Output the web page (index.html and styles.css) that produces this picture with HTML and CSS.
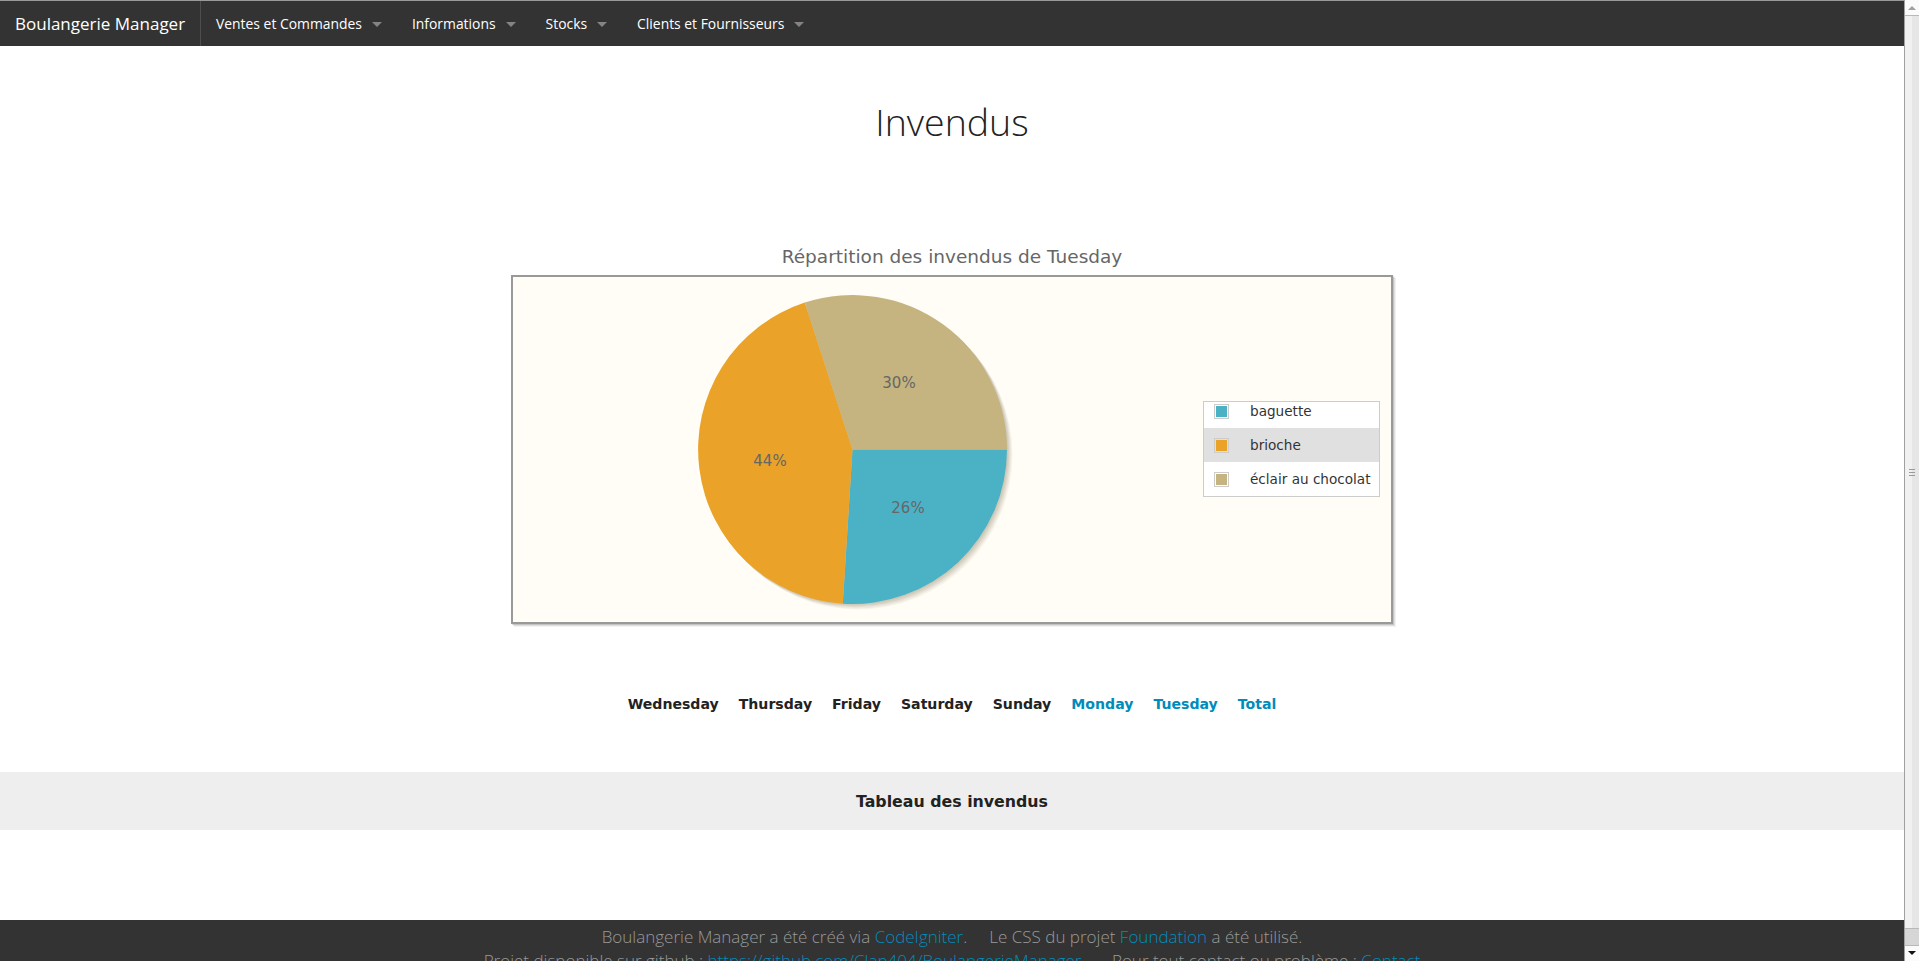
FILE: index.html
```html
<!DOCTYPE html>
<html lang="fr">
<head>
<meta charset="utf-8">
<title>Invendus - Boulangerie Manager</title>
<link rel="stylesheet" href="styles.css">
</head>
<body>
<nav class="topbar">
  <a class="brand" href="#">Boulangerie Manager</a>
  <ul class="menu">
    <li class="dropdown"><a href="#">Ventes et Commandes</a></li>
    <li class="dropdown"><a href="#">Informations</a></li>
    <li class="dropdown"><a href="#">Stocks</a></li>
    <li class="dropdown"><a href="#">Clients et Fournisseurs</a></li>
  </ul>
</nav>

<main class="content">
  <h1 class="page-title">Invendus</h1>

  <div class="chart-title">Répartition des invendus de Tuesday</div>
  <div class="chart-box">
    <svg class="pie" width="878" height="345" viewBox="0 0 878 345">
      <g fill="#5a4a20">
        <circle cx="340.6" cy="173.6" r="154.5" opacity="0.07"/>
        <circle cx="341.7" cy="174.7" r="154.5" opacity="0.07"/>
        <circle cx="342.8" cy="175.8" r="154.5" opacity="0.07"/>
        <circle cx="343.9" cy="176.9" r="154.5" opacity="0.06"/>
        <circle cx="345.0" cy="178.0" r="154.5" opacity="0.05"/>
      </g>
      <path d="M339.5 172.5 L494 172.5 A154.5 154.5 0 0 1 329.8 326.7 Z" fill="#4bb2c5"/>
      <path d="M339.5 172.5 L329.8 326.7 A154.5 154.5 0 0 1 291.8 25.6 Z" fill="#eaa228"/>
      <path d="M339.5 172.5 L291.8 25.6 A154.5 154.5 0 0 1 494 172.5 Z" fill="#c5b47f"/>
      <g class="pie-label">
        <text x="386" y="106" text-anchor="middle" dominant-baseline="central">30%</text>
        <text x="257" y="184" text-anchor="middle" dominant-baseline="central">44%</text>
        <text x="395" y="231" text-anchor="middle" dominant-baseline="central">26%</text>
      </g>
    </svg>
    <div class="legend">
      <table class="legend-table">
        <tr><td class="sw-cell"><div class="swatch"><div class="swatch-in c1"></div></div></td><td class="lbl">baguette</td></tr>
        <tr class="hl"><td class="sw-cell"><div class="swatch"><div class="swatch-in c2"></div></div></td><td class="lbl">brioche</td></tr>
        <tr><td class="sw-cell"><div class="swatch"><div class="swatch-in c3"></div></div></td><td class="lbl">éclair au chocolat</td></tr>
      </table>
    </div>
  </div>

  <div class="days">
    <a href="#" class="day">Wednesday</a>
    <a href="#" class="day">Thursday</a>
    <a href="#" class="day">Friday</a>
    <a href="#" class="day">Saturday</a>
    <a href="#" class="day">Sunday</a>
    <a href="#" class="day link">Monday</a>
    <a href="#" class="day link">Tuesday</a>
    <a href="#" class="day link">Total</a>
  </div>

  <div class="band">Tableau des invendus</div>
</main>

<footer class="footer">
  <p class="foot-line">Boulangerie Manager a été créé via <a href="#">CodeIgniter</a>.<span class="sep">Le CSS du projet <a href="#">Foundation</a> a été utilisé.</span></p>
  <p class="foot-line">Projet disponible sur github : <a href="#">https://github.com/Clap404/BoulangerieManager</a> .<span class="sep">Pour tout contact ou problème : <a href="#">Contact</a></span></p>
</footer>

<div class="scrollbar" aria-hidden="true">
  <div class="sb-btn sb-up"></div>
  <div class="sb-thumb"><div class="sb-grip"></div></div>
  <div class="sb-track"></div>
  <div class="sb-btn sb-down"></div>
</div>
</body>
</html>
```

FILE: styles.css
```css
body {
  margin: 0;
  padding-right: 15px;
  font-family: "DejaVu Sans", sans-serif;
  color: #222;
  background: #fff;
}

a {
  text-decoration: none;
}

/* Top bar */
.topbar {
  display: flex;
  align-items: stretch;
  height: 45px;
  background: #333;
  border-top: 1px solid #9a9a9a;
  font-family: "Open Sans", sans-serif;
}

.brand {
  display: flex;
  align-items: center;
  flex-shrink: 0;
  box-sizing: border-box;
  width: 201px;
  padding-left: 15px;
  white-space: nowrap;
  color: #fff;
  font-size: 17px;
  border-right: 1px solid #4e4e4e;
}

.menu {
  display: flex;
  margin: 0;
  padding: 0;
  list-style: none;
}

.menu li {
  position: relative;
  display: flex;
}

.menu li a {
  display: flex;
  align-items: center;
  padding: 0 35px 0 15px;
  white-space: nowrap;
  color: #fff;
  font-size: 13.9px;
}

.dropdown::after {
  content: "";
  position: absolute;
  right: 15px;
  top: 21px;
  border: 5px solid transparent;
  border-top-color: rgba(255, 255, 255, 0.4);
}

/* Content */
.content {
  display: flex;
  flex-direction: column;
  align-items: center;
}

.page-title {
  margin: 52px 0 0;
  font-family: "Open Sans", sans-serif;
  font-weight: 300;
  font-size: 37.5px;
  line-height: 48px;
  color: #222;
}

.chart-title {
  margin-top: 100px;
  line-height: 22px;
  font-size: 18.5px;
  color: #666;
}

.chart-box {
  position: relative;
  box-sizing: border-box;
  width: 882px;
  height: 349px;
  margin-top: 7px;
  border: 2px solid #999;
  background: #fffdf6;
  box-shadow: 1px 1px 0 rgba(0, 0, 0, 0.12), 2px 2px 0 rgba(0, 0, 0, 0.08), 3px 3px 0 rgba(0, 0, 0, 0.05);
}

.pie {
  display: block;
}

.pie-label {
  font-family: "DejaVu Sans", sans-serif;
  font-size: 15px;
  fill: #666;
}

.legend {
  position: absolute;
  left: 690px;
  top: 124px;
  width: 175px;
  height: 94px;
  border: 1px solid #ccc;
  background: #fff;
  overflow: hidden;
}

.legend-table {
  border-collapse: collapse;
  margin-top: -8px;
  width: 100%;
}

.legend-table td {
  height: 34px;
  padding: 0;
}

.legend-table .hl td {
  background: #e0e0e0;
}

.sw-cell {
  width: 36px;
  padding-left: 10px !important;
}

.swatch {
  width: 11px;
  height: 11px;
  padding: 1px;
  border: 1px solid #ccc;
}

.swatch-in {
  width: 11px;
  height: 11px;
}

.c1 { background: #4bb2c5; }
.c2 { background: #eaa228; }
.c3 { background: #c5b47f; }

.lbl {
  font-family: "DejaVu Sans", sans-serif;
  font-size: 13.6px;
  color: #333;
  white-space: nowrap;
}

/* Day links */
.days {
  display: flex;
  gap: 20px;
  margin-top: 70px;
  line-height: 20px;
}

.day {
  font-weight: bold;
  font-size: 14.1px;
  color: #222;
}

.day.link {
  color: #008cba;
}

.band {
  align-self: stretch;
  margin-top: 58px;
  height: 58px;
  display: flex;
  align-items: center;
  justify-content: center;
  background: #eee;
  font-weight: bold;
  font-size: 15.8px;
  color: #222;
}

/* Footer */
.footer {
  margin-top: 90px;
  padding: 5px 0 20px;
  background: #333;
  font-family: "Open Sans", sans-serif;
  font-weight: 300;
  font-size: 17px;
  color: #999;
  text-align: center;
}

.foot-line {
  margin: 0;
  line-height: 24px;
  white-space: nowrap;
}

.foot-line a {
  color: #008cba;
}

.sep {
  margin-left: 22px;
}

/* Scrollbar drawn over the right edge */
.scrollbar {
  position: fixed;
  top: 0;
  right: 0;
  width: 15px;
  height: 100vh;
  box-sizing: border-box;
  border-left: 1px solid #a0a0a0;
  display: flex;
  flex-direction: column;
  background: #d9d9d9;
}

.sb-btn {
  position: relative;
  height: 15px;
  flex-shrink: 0;
  background: #fbfbfb;
}

.sb-up {
  border-bottom: 1px solid #b8b8b8;
}

.sb-up::after,
.sb-down::after {
  content: "";
  position: absolute;
  left: 3px;
  border: 4px solid transparent;
}

.sb-up::after {
  top: 2px;
  border-bottom-color: #a0a0a0;
}

.sb-down::after {
  top: 5px;
  border-top-color: #111;
}

.sb-down {
  border-top: 1px solid #b8b8b8;
}

.sb-thumb {
  flex: 1;
  position: relative;
  background: linear-gradient(to right, #f1f1f1 0 7px, #e6e6e6 7px);
  border-bottom: 1px solid #b8b8b8;
}

.sb-grip {
  position: absolute;
  left: 4px;
  top: 50%;
  width: 6px;
  height: 5px;
  margin-top: -3px;
  border-top: 1px solid #999;
  border-bottom: 1px solid #999;
}

.sb-grip::after {
  content: "";
  position: absolute;
  left: 0;
  top: 2px;
  width: 6px;
  border-top: 1px solid #999;
}

.sb-track {
  height: 16px;
  flex-shrink: 0;
  background: #d6d6d6;
}
```
